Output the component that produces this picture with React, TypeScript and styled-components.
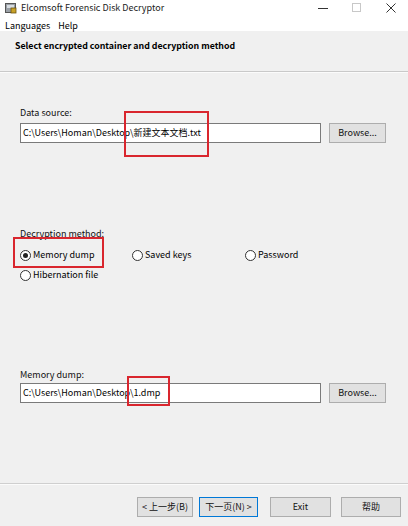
import React from "react";
import styled, { createGlobalStyle } from "styled-components";

const Global = createGlobalStyle`
  html, body { margin: 0; padding: 0; background: #f0f0f0; }
  body { font-family: "Noto Sans CJK SC", "Noto Sans", sans-serif; font-size: 9px; line-height: 12px; color: #000; }
`;

const Window = styled.div`
  position: relative;
  width: 408px;
  height: 526px;
  display: flex;
  flex-direction: column;
  background: #f0f0f0;
  overflow: hidden;
`;

const TitleBar = styled.div`
  height: 18px;
  background: #fff;
  display: flex;
  align-items: center;
  padding-left: 5px;
`;

const TitleText = styled.span`
  margin-left: 4px;
  font-size: 9px;
  color: #222;
  padding-bottom: 3px;
`;

const Controls = styled.div`
  margin-left: auto;
  display: flex;
  height: 100%;
  padding-bottom: 3px;
`;

const Ctrl = styled.div`
  width: 34px;
  display: flex;
  align-items: center;
  justify-content: center;
`;

const MenuBar = styled.div`
  height: 13px;
  box-sizing: border-box;
  padding: 2px 0 0 5px;
  background: #fff;
  display: flex;
  align-items: center;
  gap: 8px;
  font-size: 9px;
`;

const Header = styled.div`
  height: 41px;
  display: flex;
  align-items: center;
  padding-left: 15px;
  padding-bottom: 10px;
  box-sizing: border-box;
  border-bottom: 1px solid #c9c9c9;
  box-shadow: 0 1px 0 #fbfbfb;
  font-weight: bold;
  font-size: 8.8px;
`;

const Content = styled.div`
  flex: 1;
  display: flex;
  flex-direction: column;
  padding: 0 22px 0 20px;
  border-bottom: 1px solid #cfcfcf;
  box-shadow: 0 1px 0 #fbfbfb;
`;

const Label = styled.div<{ $top: number }>`
  margin-top: ${(p) => p.$top}px;
  font-size: 9px;
  line-height: 12px;
  color: #111;
`;

const FieldRow = styled.div<{ $top: number }>`
  margin-top: ${(p) => p.$top}px;
  display: flex;
  gap: 8px;
  height: 20px;
`;

const Input = styled.div`
  flex: 1;
  background: #fff;
  border: 1px solid #7a7a7a;
  display: flex;
  align-items: center;
  padding-left: 2px;
  font-size: 9px;
  white-space: nowrap;
`;

const Button = styled.div<{ $w: number; $ml?: number; $focus?: boolean }>`
  width: ${(p) => p.$w}px;
  margin-left: ${(p) => p.$ml ?? 0}px;
  box-sizing: border-box;
  height: 20px;
  background: #e1e1e1;
  border: 1px solid ${(p) => (p.$focus ? "#0078d7" : "#adadad")};
  display: flex;
  align-items: center;
  justify-content: center;
  font-size: 9px;
  color: #111;
`;

const RadioGrid = styled.div`
  margin-top: 8px;
  display: grid;
  grid-template-columns: 112px 113px 100px;
  row-gap: 6px;
`;

const RadioItem = styled.div`
  display: flex;
  align-items: center;
  gap: 2px;
  height: 14px;
  font-size: 9px;
`;

const Circle = styled.span<{ $on?: boolean }>`
  width: 9px;
  height: 9px;
  border: 1px solid #333;
  border-radius: 50%;
  background: #fff;
  display: flex;
  align-items: center;
  justify-content: center;
  &::after {
    content: "";
    width: 5px;
    height: 5px;
    border-radius: 50%;
    background: ${(p) => (p.$on ? "#222" : "transparent")};
  }
`;

const Footer = styled.div`
  height: 42px;
  box-sizing: border-box;
  display: flex;
  align-items: flex-start;
  justify-content: flex-end;
  padding: 13px 7px 0 0;
`;

const Mark = styled.div`
  position: absolute;
  border: 2px solid #d9262e;
  box-sizing: border-box;
  pointer-events: none;
`;

const Radio = ({ on, children }: { on?: boolean; children: React.ReactNode }) => (
  <RadioItem>
    <Circle $on={on} />
    <span>{children}</span>
  </RadioItem>
);

export default function App() {
  return (
    <Window>
      <Global />
      <TitleBar>
        <svg width="12" height="12" viewBox="0 0 12 12" style={{ marginBottom: 3 }}>
          <rect x="0.5" y="1.5" width="10" height="9" fill="#9aa0a6" stroke="#555" />
          <rect x="2" y="3" width="7" height="3" fill="#d8dde2" />
          <rect x="6" y="6" width="5" height="5" fill="#c9a227" stroke="#6b5410" strokeWidth="0.8" />
        </svg>
        <TitleText>Elcomsoft Forensic Disk Decryptor</TitleText>
        <Controls>
          <Ctrl>
            <svg width="10" height="10"><line x1="0" y1="5.5" x2="10" y2="5.5" stroke="#333" /></svg>
          </Ctrl>
          <Ctrl>
            <svg width="10" height="10"><rect x="0.5" y="0.5" width="8" height="8" fill="none" stroke="#c8c8c8" /></svg>
          </Ctrl>
          <Ctrl>
            <svg width="10" height="10"><path d="M0.5 0.5 L9.5 9.5 M9.5 0.5 L0.5 9.5" stroke="#333" /></svg>
          </Ctrl>
        </Controls>
      </TitleBar>
      <MenuBar>
        <span>Languages</span>
        <span>Help</span>
      </MenuBar>
      <Header>Select encrypted container and decryption method</Header>
      <Content>
        <Label $top={35}>Data source:</Label>
        <FieldRow $top={4}>
          <Input>C:\Users\Homan\Desktop\新建文本文档.txt</Input>
          <Button $w={57}>Browse...</Button>
        </FieldRow>
        <Label $top={85}>Decryption method:</Label>
        <RadioGrid>
          <Radio on>Memory dump</Radio>
          <Radio>Saved keys</Radio>
          <Radio>Password</Radio>
          <Radio>Hibernation file</Radio>
        </RadioGrid>
        <Label $top={87}>Memory dump:</Label>
        <FieldRow $top={2}>
          <Input>C:\Users\Homan\Desktop\1.dmp</Input>
          <Button $w={57}>Browse...</Button>
        </FieldRow>
      </Content>
      <Footer>
        <Button $w={56}>&lt; 上一步(B)</Button>
        <Button $w={59} $ml={6} $focus>下一页(N) &gt;</Button>
        <Button $w={61} $ml={12}>Exit</Button>
        <Button $w={60} $ml={10}>帮助</Button>
      </Footer>
      <Mark style={{ left: 124, top: 111, width: 85, height: 46 }} />
      <Mark style={{ left: 13, top: 237, width: 91, height: 31 }} />
      <Mark style={{ left: 127, top: 376, width: 43, height: 30 }} />
    </Window>
  );
}
